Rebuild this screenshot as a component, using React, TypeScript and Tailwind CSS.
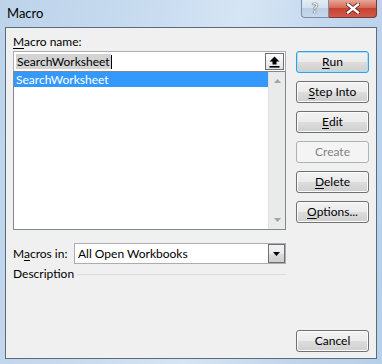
import React from "react";

const font = { fontFamily: "Lato, 'Noto Sans', sans-serif" };

function U({ children }: { children: React.ReactNode }) {
  return <span className="underline underline-offset-[2px] decoration-[1px]">{children}</span>;
}

function Btn({
  children,
  focused,
  disabled,
}: {
  children: React.ReactNode;
  focused?: boolean;
  disabled?: boolean;
}) {
  const cls = disabled
    ? "border-[#adb2b5] bg-[#f4f4f4] text-[#838383]"
    : focused
    ? "border-[#3c9ee0] bg-[linear-gradient(#f2f2f2_0%,#ebebeb_50%,#dddddd_50%,#cfcfcf_100%)] shadow-[inset_0_0_0_1px_#a6e0f8] text-black"
    : "border-[#707070] bg-[linear-gradient(#f2f2f2_0%,#ebebeb_50%,#dddddd_50%,#cfcfcf_100%)] shadow-[inset_0_0_0_1px_#fbfbfb] text-black";
  return (
    <div
      className={`h-[22px] w-[73px] rounded-[3px] border flex items-center justify-center text-[12px] leading-none ${cls}`}
    >
      {children}
    </div>
  );
}

function Tri({ down, color }: { down?: boolean; color: string }) {
  return (
    <svg width="7" height="4" viewBox="0 0 7 4">
      {down ? (
        <polygon points="0,0 7,0 3.5,4" fill={color} />
      ) : (
        <polygon points="0,4 7,4 3.5,0" fill={color} />
      )}
    </svg>
  );
}

export default function App() {
  return (
    <div
      className="w-[382px] h-[364px] flex flex-col bg-[linear-gradient(100deg,#bcd3ea_0%,#c9dcf0_35%,#d6e5f4_55%,#bfd5ec_80%,#b6cfe8_100%)] text-black"
      style={font}
    >
      {/* title bar */}
      <div className="h-[27px] flex items-start justify-between">
        <div className="pl-[7px] pt-[5px] text-[13px] leading-[16px]">Macro</div>
        <div className="flex mr-[5px]">
          <div className="w-[28px] h-[18px] border border-t-0 border-[#7b8ea5] rounded-bl-[4px] bg-[linear-gradient(#e3ecf6_0%,#d2e0ef_50%,#bccfe4_50%,#c6d8ec_100%)] flex items-center justify-center">
            <span className="text-[13px] font-bold leading-none text-[#f6f6f6] [text-shadow:0_0_1px_#333,0_0_1px_#333]">?</span>
          </div>
          <div className="w-[48px] h-[18px] border border-t-0 border-l-0 border-[#7a3a34] rounded-br-[4px] bg-[linear-gradient(#e8a597_0%,#d66b5c_45%,#c7432f_50%,#d2594a_100%)] flex items-center justify-center">
            <svg width="14" height="11" viewBox="0 0 14 11">
              <path d="M2 1.5 L12 9.5 M12 1.5 L2 9.5" stroke="#5a1e18" strokeWidth="4" strokeLinecap="square" />
              <path d="M2 1.5 L12 9.5 M12 1.5 L2 9.5" stroke="#ffffff" strokeWidth="2.4" strokeLinecap="square" />
            </svg>
          </div>
        </div>
      </div>

      {/* client area */}
      <div className="mx-[5px] h-[332px] border border-[#5b6b7c] bg-[#f0f0f0] flex pl-[7px] text-[12px]">
        {/* left column */}
        <div className="w-[273px] flex flex-col pt-[5px]">
          <div className="h-[18px] leading-[18px]">
            <U>M</U>acro name:
          </div>
          {/* input */}
          <div className="h-[20px] border border-b-0 border-[#abadb3] bg-white flex items-center justify-between pl-[2px] pr-[1px]">
            <div className="flex items-center">
              <span className="bg-[#d3d3d3] leading-[15px] px-[1px]">SearchWorksheet</span>
              <span className="w-[1px] h-[14px] bg-black" />
            </div>
            <div className="w-[19px] h-[17px] border border-[#707070] bg-[linear-gradient(#ffffff,#f0f0f0_50%,#e3e3e3)] flex items-center justify-center">
              <svg width="11" height="12" viewBox="0 0 11 12">
                <polygon points="5.5,0.5 10.5,5.5 7.5,5.5 7.5,8.5 3.5,8.5 3.5,5.5 0.5,5.5" fill="#000" />
                <rect x="0.5" y="10" width="10" height="1.6" fill="#000" />
              </svg>
            </div>
          </div>
          {/* listbox */}
          <div className="h-[159px] border border-[#828790] bg-white flex">
            <div className="flex-1">
              <div className="h-[15px] bg-[#3399ff] text-white leading-[15px] pl-[2px]">SearchWorksheet</div>
            </div>
            <div className="w-[17px] bg-[#eaeaea] border-l border-[#e0e0e0] flex flex-col items-center justify-between py-[7px]">
              <Tri color="#a3a3a3" />
              <Tri down color="#a3a3a3" />
            </div>
          </div>
          {/* macros in */}
          <div className="mt-[13px] h-[21px] flex items-center">
            <div className="w-[61px]">
              M<U>a</U>cros in:
            </div>
            <div className="flex-1 h-[21px] border border-[#abadb3] bg-white flex items-center justify-between pl-[3px]">
              <span>All Open Workbooks</span>
              <div className="w-[17px] h-[19px] border border-[#707070] bg-[linear-gradient(#f2f2f2_0%,#ebebeb_50%,#dddddd_50%,#cfcfcf_100%)] flex items-center justify-center">
                <Tri down color="#000" />
              </div>
            </div>
          </div>
          {/* description */}
          <div className="mt-[2px] h-[16px] flex items-center">
            <span className="leading-[16px]">Description</span>
            <div className="flex-1 ml-[3px] h-[1px] bg-[#d5dfe5]" />
          </div>
        </div>

        {/* right column */}
        <div className="ml-[10px] flex flex-col gap-[8px] pt-[23px] pb-[6px]">
          <Btn focused>
            <U>R</U>un
          </Btn>
          <Btn>
            <U>S</U>tep Into
          </Btn>
          <Btn>
            <U>E</U>dit
          </Btn>
          <Btn disabled>Create</Btn>
          <Btn>
            <U>D</U>elete
          </Btn>
          <Btn>
            <U>O</U>ptions...
          </Btn>
          <div className="mt-auto">
            <Btn>Cancel</Btn>
          </div>
        </div>
      </div>
    </div>
  );
}
